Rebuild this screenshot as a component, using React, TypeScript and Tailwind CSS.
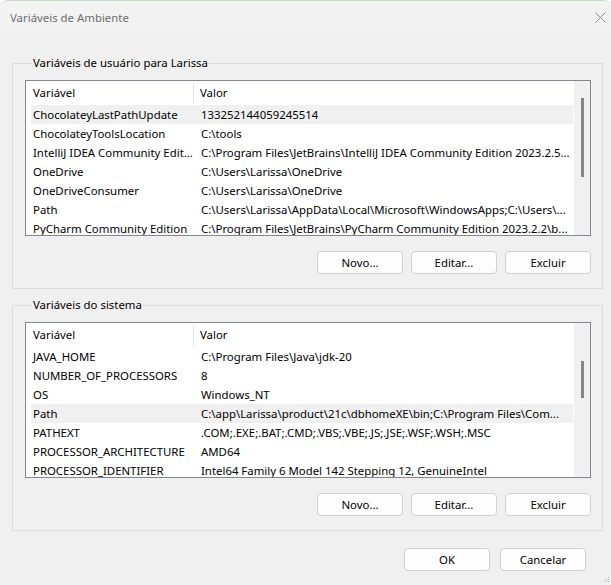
import React from 'react';

type Row = { name: string; value: string; selected?: boolean };

const userRows: Row[] = [
  { name: 'ChocolateyLastPathUpdate', value: '133252144059245514', selected: true },
  { name: 'ChocolateyToolsLocation', value: 'C:\\tools' },
  { name: 'IntelliJ IDEA Community Edit...', value: 'C:\\Program Files\\JetBrains\\IntelliJ IDEA Community Edition 2023.2.5...' },
  { name: 'OneDrive', value: 'C:\\Users\\Larissa\\OneDrive' },
  { name: 'OneDriveConsumer', value: 'C:\\Users\\Larissa\\OneDrive' },
  { name: 'Path', value: 'C:\\Users\\Larissa\\AppData\\Local\\Microsoft\\WindowsApps;C:\\Users\\...' },
  { name: 'PyCharm Community Edition', value: 'C:\\Program Files\\JetBrains\\PyCharm Community Edition 2023.2.2\\b...' },
];

const systemRows: Row[] = [
  { name: 'JAVA_HOME', value: 'C:\\Program Files\\Java\\jdk-20' },
  { name: 'NUMBER_OF_PROCESSORS', value: '8' },
  { name: 'OS', value: 'Windows_NT' },
  { name: 'Path', value: 'C:\\app\\Larissa\\product\\21c\\dbhomeXE\\bin;C:\\Program Files\\Com...', selected: true },
  { name: 'PATHEXT', value: '.COM;.EXE;.BAT;.CMD;.VBS;.VBE;.JS;.JSE;.WSF;.WSH;.MSC' },
  { name: 'PROCESSOR_ARCHITECTURE', value: 'AMD64' },
  { name: 'PROCESSOR_IDENTIFIER', value: 'Intel64 Family 6 Model 142 Stepping 12, GenuineIntel' },
];

const WinButton: React.FC<{ label: string }> = ({ label }) => (
  <button className="w-[86px] h-[23px] shrink-0 rounded-[4px] border border-[#d0d0d0] bg-[#fdfdfd] text-[11.4px] text-black leading-none">
    {label}
  </button>
);

// list view with header + a thin scrollbar on the right
const ListView: React.FC<{ rows: Row[]; thumbTop: number; thumbHeight: number }> = ({ rows, thumbTop, thumbHeight }) => (
  <div className="h-[156px] border border-[#828790] bg-white flex min-w-0">
    <div className="flex-1 min-w-0 flex flex-col overflow-hidden pl-[5px]">
      <div className="h-[24px] shrink-0 flex items-center">
        <div className="w-[163px] shrink-0 h-[21px] flex items-center pl-[2px] border-r border-[#e5e5e5]">Variável</div>
        <div className="pl-[6px]">Valor</div>
      </div>
      <div className="flex-1 overflow-hidden">
        {rows.map((r) => (
          <div key={r.name} className={`h-[19px] flex items-center whitespace-nowrap ${r.selected ? 'bg-[#f0f0f0]' : ''}`}>
            <div className="w-[164px] shrink-0 pl-[2px] overflow-hidden">{r.name}</div>
            <div className="pl-[6px] min-w-0 overflow-hidden">{r.value}</div>
          </div>
        ))}
      </div>
    </div>
    <div className="w-[17px] shrink-0 bg-[#f0f0f0] border-l border-white flex justify-center">
      <div className="w-[3px] bg-[#858585]" style={{ marginTop: thumbTop, height: thumbHeight }} />
    </div>
  </div>
);

const Group: React.FC<{ title: string; rows: Row[]; thumbTop: number; thumbHeight: number; className?: string }> = ({ title, rows, thumbTop, thumbHeight, className }) => (
  <fieldset className={`min-w-0 ml-[12px] mr-[8px] border border-[#dcdcdc] pl-[12px] pr-[11px] pt-[9px] pb-[14px] ${className ?? ''}`}>
    <legend className="ml-[7px] px-[1px] leading-[16px]">{title}</legend>
    <ListView rows={rows} thumbTop={thumbTop} thumbHeight={thumbHeight} />
    <div className="flex justify-end gap-[8px] mt-[15px]">
      <WinButton label="Novo..." />
      <WinButton label="Editar..." />
      <WinButton label="Excluir" />
    </div>
  </fieldset>
);

export default function App() {
  return (
    <div
      className="w-[611px] h-[585px] bg-[#f0f0f0] text-[11.4px] text-black flex flex-col overflow-hidden rounded-t-[8px] border-t border-[#c9dcc9] relative"
      style={{ fontFamily: '"Noto Sans", "Open Sans", sans-serif' }}
    >
      {/* title bar */}
      <div className="h-[32px] shrink-0 bg-[#f3f3f3] flex items-center justify-between pl-[10px] pr-[5px]">
        <span className="text-[#6e6e6e] pt-[2px]">Variáveis de Ambiente</span>
        <svg width="11" height="11" viewBox="0 0 11 11">
          <path d="M0.5 0.5 L10.5 10.5 M10.5 0.5 L0.5 10.5" stroke="#8a8a8a" strokeWidth="1" />
        </svg>
      </div>

      <Group title="Variáveis de usuário para Larissa" rows={userRows} thumbTop={17} thumbHeight={79} className="mt-[22px]" />
      <Group title="Variáveis do sistema" rows={systemRows} thumbTop={38} thumbHeight={37} className="mt-[8px]" />

      <div className="flex justify-end gap-[10px] mt-[17px] mr-[25px]">
        <WinButton label="OK" />
        <WinButton label="Cancelar" />
      </div>

      {/* resize grip */}
      <svg width="6" height="6" viewBox="0 0 6 6" className="absolute right-[1px] bottom-[2px]">
        <rect x="4" y="0" width="1" height="1" fill="#b0b0b0" />
        <rect x="2" y="2" width="1" height="1" fill="#b0b0b0" />
        <rect x="4" y="2" width="1" height="1" fill="#b0b0b0" />
        <rect x="0" y="4" width="1" height="1" fill="#b0b0b0" />
        <rect x="2" y="4" width="1" height="1" fill="#b0b0b0" />
        <rect x="4" y="4" width="1" height="1" fill="#b0b0b0" />
      </svg>
    </div>
  );
}
